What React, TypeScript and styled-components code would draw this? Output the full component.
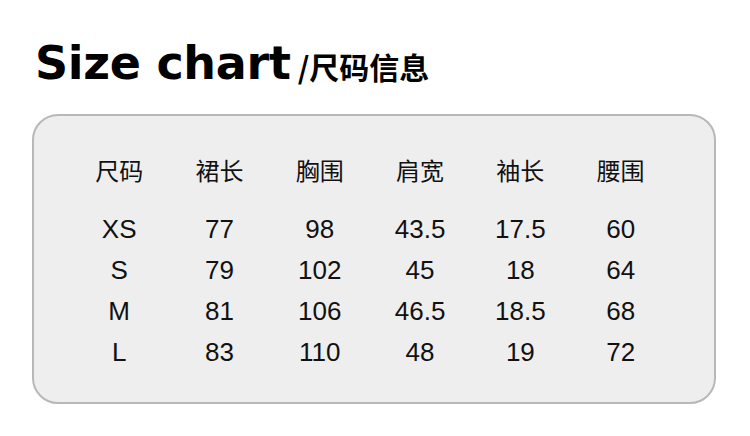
import styled, { createGlobalStyle } from "styled-components";

const GlobalStyle = createGlobalStyle`
  body {
    margin: 0;
    background: #ffffff;
    font-family: "Liberation Sans", "Noto Sans CJK SC", sans-serif;
    color: #111111;
  }
`;

const headers = ["尺码", "裙长", "胸围", "肩宽", "袖长", "腰围"];

const rows = [
  ["XS", "77", "98", "43.5", "17.5", "60"],
  ["S", "79", "102", "45", "18", "64"],
  ["M", "81", "106", "46.5", "18.5", "68"],
  ["L", "83", "110", "48", "19", "72"],
];

const App = () => {
  return (
    <>
      <GlobalStyle />
      <Page>
        <TitleLine>
          <Title>Size chart</Title>
          <SubTitle>/尺码信息</SubTitle>
        </TitleLine>
        <Card>
          <HeadRow>
            {headers.map((h) => (
              <Cell key={h}>{h}</Cell>
            ))}
          </HeadRow>
          {rows.map((r) => (
            <Row key={r[0]}>
              {r.map((v, i) => (
                <Cell key={i}>{v}</Cell>
              ))}
            </Row>
          ))}
        </Card>
      </Page>
    </>
  );
};

export default App;

const Page = styled.div`
  width: 750px;
  height: 436px;
  padding: 38px 0 0 32px;
  box-sizing: border-box;
`;

const TitleLine = styled.div`
  display: flex;
  align-items: baseline;
  gap: 7px;
  padding-left: 3px;
  height: 50px;
`;

const Title = styled.h1`
  margin: 0;
  font-family: "DejaVu Sans", Lato, sans-serif;
  font-weight: 700;
  font-size: 46px;
  line-height: 50px;
  letter-spacing: -0.3px;
  color: #000000;
`;

const SubTitle = styled.span`
  font-family: "Noto Sans CJK SC", sans-serif;
  font-weight: 700;
  font-size: 30px;
  color: #000000;
`;

const Card = styled.div`
  margin-top: 26px;
  width: 684px;
  height: 290px;
  box-sizing: border-box;
  border: 2px solid #b8b8b8;
  border-radius: 26px;
  background: #eeeeee;
  padding: 33px 0 0 35px;
`;

const Row = styled.div`
  display: grid;
  grid-template-columns: repeat(6, 100.3px);
  height: 41px;
  align-items: center;
  font-size: 26px;
`;

const HeadRow = styled(Row)`
  margin-bottom: 19px;
  font-family: "Noto Sans CJK SC", sans-serif;
  font-size: 24px;
`;

const Cell = styled.div`
  text-align: center;
  line-height: 41px;
`;
